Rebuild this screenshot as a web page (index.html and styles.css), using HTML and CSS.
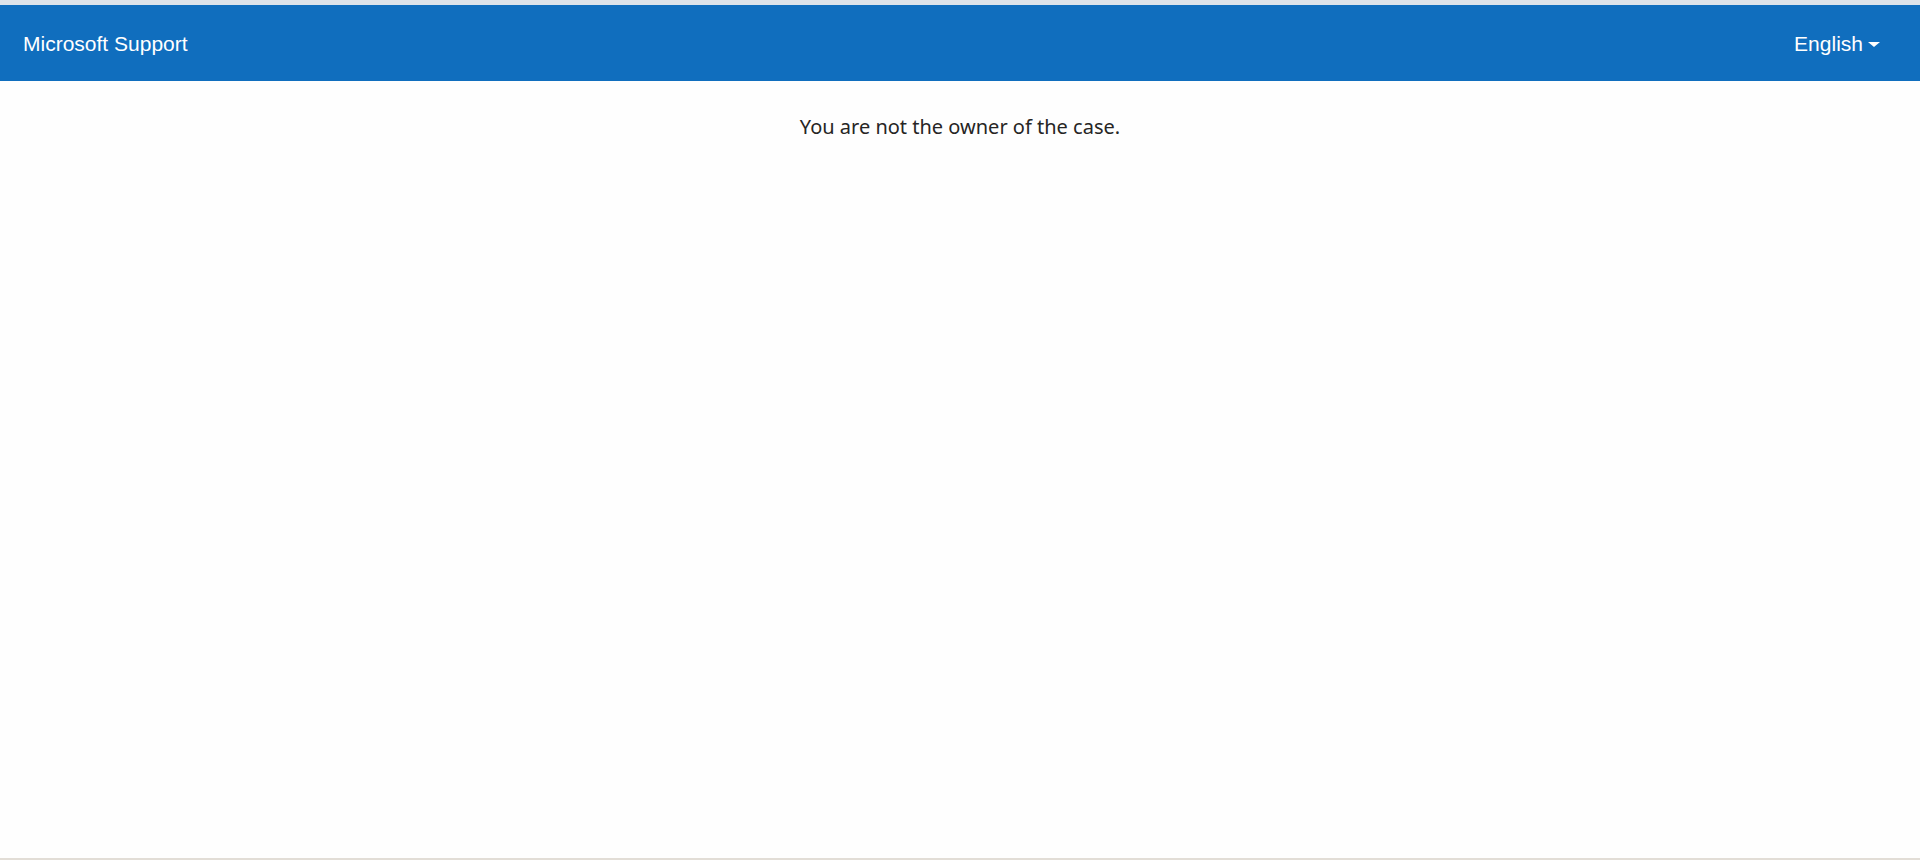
FILE: index.html
```html
<!DOCTYPE html>
<html lang="en">
  <head>
    <meta charset="UTF-8" />
    <meta name="viewport" content="width=device-width, initial-scale=1.0" />
    <title>Microsoft Support</title>
    <link rel="stylesheet" href="styles.css">
  </head>
  <body>
    <div class="page">
      <header class="navbar">
        <a class="brand" href="#">Microsoft Support</a>
        <a class="lang" href="#">English <span class="caret"></span></a>
      </header>
      <main class="content">
        <p class="message">You are not the owner of the case.</p>
      </main>
    </div>
  </body>
</html>
```

FILE: styles.css
```css
* {
  padding: 0;
  margin: 0;
  box-sizing: border-box;
}
html,
body {
  height: 100%;
}
body {
  background-color: #fefefe;
  font-family: "Liberation Sans", Arial, sans-serif;
  border-top: 5px solid #dde3ea;
  border-bottom: 2px solid #e2ddd6;
}
.page {
  height: 100%;
}
.navbar {
  height: 76px;
  background-color: #106ebe;
  display: flex;
  align-items: center;
  justify-content: space-between;
  padding: 2px 40px 0 23px;
}
.navbar a {
  color: #fff;
  text-decoration: none;
  font-size: 21px;
}
.lang {
  display: flex;
  align-items: center;
}
.caret {
  display: inline-block;
  width: 0;
  height: 0;
  margin-left: 5px;
  border-top: 5px solid #fff;
  border-left: 6px solid transparent;
  border-right: 6px solid transparent;
}
.content {
  text-align: center;
  padding-top: 32px;
}
.message {
  font-family: "Noto Sans", "Open Sans", sans-serif;
  font-size: 20px;
  color: #262524;
}
```
